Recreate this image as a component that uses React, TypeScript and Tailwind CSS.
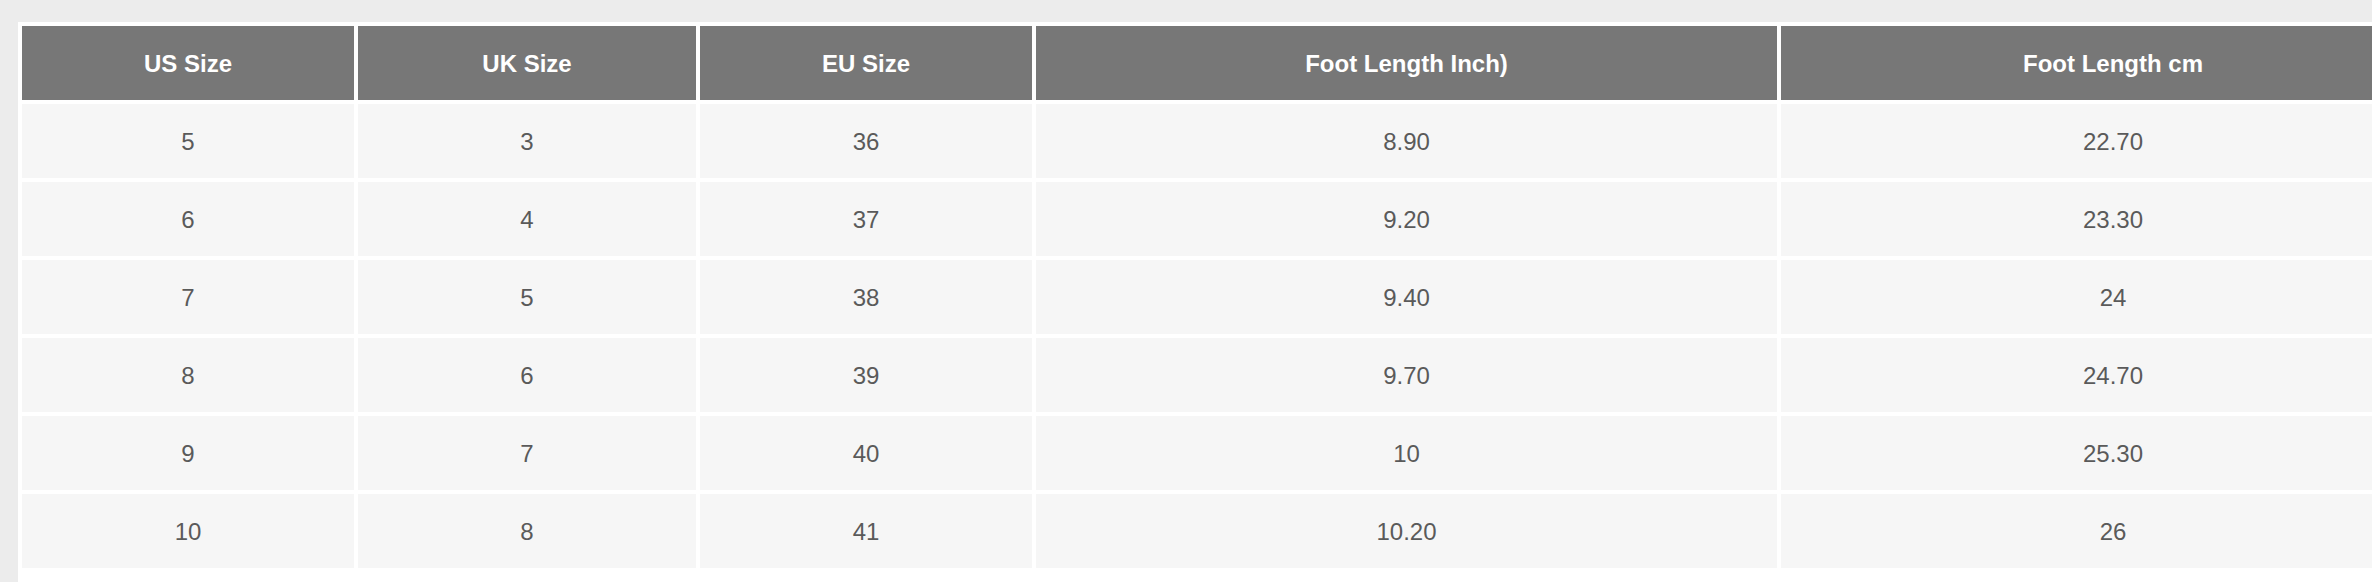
import React from 'react';

const headers = ['US Size', 'UK Size', 'EU Size', 'Foot Length Inch)', 'Foot Length cm'];

const rows = [
  ['5', '3', '36', '8.90', '22.70'],
  ['6', '4', '37', '9.20', '23.30'],
  ['7', '5', '38', '9.40', '24'],
  ['8', '6', '39', '9.70', '24.70'],
  ['9', '7', '40', '10', '25.30'],
  ['10', '8', '41', '10.20', '26'],
];

const App = () => {
  return (
    <div className="w-[2372px] h-[582px] overflow-hidden bg-[#ececec] pt-[22px] pl-[18px] font-['Liberation_Sans',Arial,sans-serif]">
      <div className="w-[2431px] h-full bg-white">
        <table className="table-fixed border-separate border-spacing-[4px] w-[2431px] text-[24px]">
          <colgroup>
            <col className="w-[332px]" />
            <col className="w-[338px]" />
            <col className="w-[332px]" />
            <col className="w-[741px]" />
            <col className="w-[664px]" />
          </colgroup>
          <thead>
            <tr>
              {headers.map((h) => (
                <th key={h} className="h-[74px] p-0 pt-[2px] bg-[#777777] text-white font-bold text-center align-middle">
                  {h}
                </th>
              ))}
            </tr>
          </thead>
          <tbody>
            {rows.map((row, i) => (
              <tr key={i}>
                {row.map((cell, j) => (
                  <td key={j} className="h-[74px] p-0 pt-[2px] bg-[#f6f6f6] text-[#5a5a5a] text-center align-middle">
                    {cell}
                  </td>
                ))}
              </tr>
            ))}
          </tbody>
        </table>
      </div>
    </div>
  );
};

export default App;
